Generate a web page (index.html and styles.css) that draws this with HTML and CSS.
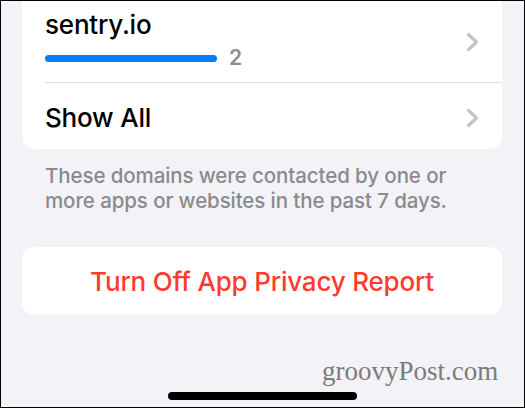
FILE: index.html
```html
<!DOCTYPE html>
<html>
<head>
<meta charset="utf-8">
<link rel="stylesheet" href="styles.css">
</head>
<body>
<div class="screen">
  <div class="card list">
    <div class="row domain">
      <div class="info">
        <div class="name">sentry.io</div>
        <div class="meter">
          <span class="bar" style="width:172px"></span>
          <span class="count">2</span>
        </div>
      </div>
      <svg class="chev" width="13" height="20" viewBox="0 0 13 20"><polyline points="2.5,2.5 10.5,10 2.5,17.5" fill="none" stroke="#c4c4c8" stroke-width="3.2" stroke-linecap="round" stroke-linejoin="round"/></svg>
    </div>
    <div class="row showall">
      <span class="label">Show All</span>
      <svg class="chev" width="13" height="20" viewBox="0 0 13 20"><polyline points="2.5,2.5 10.5,10 2.5,17.5" fill="none" stroke="#c4c4c8" stroke-width="3.2" stroke-linecap="round" stroke-linejoin="round"/></svg>
    </div>
  </div>
  <p class="footnote">These domains were contacted by one or<br>more apps or websites in the past 7 days.</p>
  <div class="card action">Turn Off App Privacy Report</div>
  <div class="watermark">groovyPost.com</div>
  <div class="home"></div>
</div>
</body>
</html>
```

FILE: styles.css
```css
* { box-sizing: border-box; }
html, body { margin: 0; padding: 0; }
body { font-family: Inter, "Noto Sans", sans-serif; }

.screen {
  position: relative;
  width: 525px;
  height: 408px;
  border: 1px solid #000;
  background: #f2f2f7;
  overflow: hidden;
  display: flex;
  flex-direction: column;
  padding: 0 22px 0 21px;
}

.card {
  background: #fff;
  border-radius: 12px;
}

.list {
  border-top-left-radius: 0;
  border-top-right-radius: 0;
  padding-left: 23px;
}

.row {
  display: flex;
  align-items: center;
  justify-content: space-between;
  padding-right: 23px;
}

.domain {
  height: 82px;
  border-bottom: 1px solid #dedee3;
  align-items: flex-start;
}

.info { padding-top: 9px; }

.name {
  font-size: 26px;
  font-weight: 500;
  line-height: 30px;
  color: #000;
  letter-spacing: -0.2px;
}

.meter {
  display: flex;
  align-items: center;
  gap: 12px;
  margin-top: 6px;
}

.bar {
  display: block;
  height: 7px;
  border-radius: 4px;
  background: #0a7aff;
}

.count {
  font-size: 21px;
  font-weight: 600;
  line-height: 24px;
  color: #8e8e93;
}

.domain .chev { margin-top: 31px; }

.showall { height: 66px; }

.label {
  font-size: 26px;
  font-weight: 500;
  color: #000;
  letter-spacing: -0.2px;
  padding-top: 2px;
}

.showall .chev { margin-top: 4px; }

.footnote {
  margin: 14px 0 0 0;
  padding-left: 23px;
  font-size: 20.5px;
  font-weight: 500;
  line-height: 25px;
  color: #8a8a8e;
  letter-spacing: -0.1px;
}

.action {
  margin-top: 34px;
  height: 68px;
  display: flex;
  align-items: center;
  justify-content: center;
  font-size: 26px;
  font-weight: 500;
  color: #ff3b30;
  letter-spacing: -0.2px;
}

.watermark {
  position: absolute;
  left: 321px;
  top: 355px;
  font-family: "Liberation Serif", serif;
  font-size: 27px;
  color: #7b7b7b;
}

.home {
  position: absolute;
  left: 167px;
  top: 391px;
  width: 189px;
  height: 8px;
  border-radius: 4px;
  background: #000;
}
```
